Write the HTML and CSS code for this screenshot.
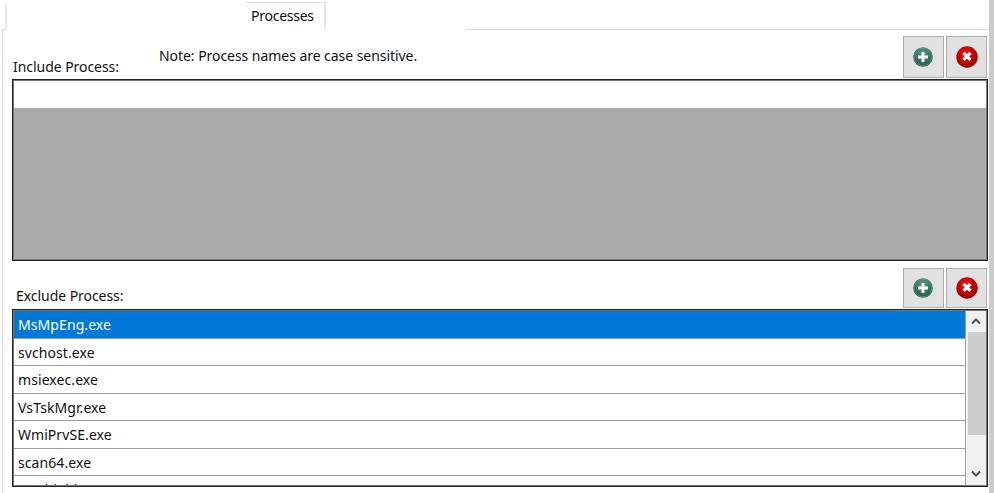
FILE: index.html
```
<!DOCTYPE html>
<html lang="en">
<head>
<meta charset="utf-8">
<title>Processes</title>
<link rel="stylesheet" href="styles.css">
</head>
<body>
<svg class="defs" aria-hidden="true">
  <defs>
    <radialGradient id="green" cx="50%" cy="30%" r="70%"><stop offset="0" stop-color="#5d9b8a"/><stop offset=".6" stop-color="#34705e"/><stop offset="1" stop-color="#285848"/></radialGradient>
    <radialGradient id="red" cx="45%" cy="35%" r="65%"><stop offset="0" stop-color="#e51a1a"/><stop offset=".6" stop-color="#c90000"/><stop offset="1" stop-color="#850000"/></radialGradient>
    <symbol id="add" viewBox="0 0 22 22"><circle cx="11" cy="11" r="9.8" fill="url(#green)"/><circle cx="11" cy="11" r="8.8" fill="none" stroke="#6fa092" stroke-width=".6"/><path d="M11 6v10M6 11h10" stroke="#fff" stroke-width="2.8"/></symbol>
    <symbol id="remove" viewBox="0 0 22 22"><circle cx="11" cy="11" r="10.7" fill="url(#red)"/><path d="M7.5 6.8l7 7M14.5 6.8l-7 7" stroke="#fff" stroke-width="3.2"/></symbol>
  </defs>
</svg>
<div class="window">
  <div class="tabs"><div class="tab-edge"></div><div class="tab"><span>Processes</span></div></div>
  <main class="page">
    <div class="top-line"><i></i><i></i><i></i></div>
    <header class="bar include">
      <label class="title">Include Process:</label>
      <p class="note">Note: Process names are case sensitive.</p>
      <div class="actions"><button><svg><use href="#add"/></svg></button><button><svg><use href="#remove"/></svg></button></div>
    </header>
    <section class="grid empty"><div class="blank"></div></section>
    <header class="bar exclude">
      <label class="title">Exclude Process:</label>
      <div class="actions"><button><svg><use href="#add"/></svg></button><button><svg><use href="#remove"/></svg></button></div>
    </header>
    <section class="grid list">
      <ul>
        <li class="selected">MsMpEng.exe</li>
        <li>svchost.exe</li>
        <li>msiexec.exe</li>
        <li>VsTskMgr.exe</li>
        <li>WmiPrvSE.exe</li>
        <li>scan64.exe</li>
        <li>mcshield.exe</li>
      </ul>
      <div class="scroll">
        <svg class="arrow" viewBox="0 0 18 21"><path d="M5 12.5l4-4 4 4" /></svg>
        <div class="thumb"></div>
        <svg class="arrow down" viewBox="0 0 18 21"><path d="M5 7.5l4 4 4-4" /></svg>
      </div>
    </section>
  </main>
</div>
<div class="edge"></div>
</body>
</html>
```
FILE: styles.css
```
* { box-sizing: border-box; }
body { margin: 0; width: 994px; height: 493px; overflow: hidden; display: flex; background: #fff; color: #111; font: 14px/20px "Noto Sans", "Open Sans", sans-serif; letter-spacing: -0.05px; }
.defs { position: absolute; width: 0; height: 0; }
.window { width: 989px; height: 493px; }
.edge { width: 5px; background: #cbcbcb; }
.tabs { height: 29px; display: flex; align-items: flex-start; }
.tab-edge { width: 7px; height: 25px; margin-top: 4px; border-right: 2px solid #e8e8e8; }
.tab { width: 81px; height: 27px; margin: 2px 0 0 238px; padding: 3px 0 0 6px; border-top: 1px solid #e0e0e0; border-right: 2px solid #e4e4e4; white-space: nowrap; letter-spacing: -0.25px; }
.page { height: 464px; margin-left: 2px; border-left: 1px solid #dcdcdc; }
.top-line { height: 1px; display: flex; }
.top-line i:nth-child(1) { width: 3px; background: #dcdcdc; }
.top-line i:nth-child(2) { width: 460px; }
.top-line i:nth-child(3) { flex: 1; background: #dcdcdc; }
.bar { display: flex; align-items: flex-start; white-space: nowrap; }
.include { height: 49px; }
.include .title { width: 156px; padding: 27px 0 0 10px; }
.note { margin: 0; padding-top: 16px; }
.actions { display: flex; gap: 2px; margin: 6px 2px 0 auto; }
button { width: 41px; height: 42px; padding: 0; display: flex; align-items: center; justify-content: center; border: 1px solid #adadad; background: #e1e1e1; }
button svg { width: 22px; height: 22px; margin: 0 2px 1px 0; }
button + button svg { margin-right: 0; }
.grid { width: 976px; margin-left: 9px; border: 1px solid #222; outline: 1px solid #777; outline-offset: -2px; }
.empty { height: 182px; padding: 1px; background: #ababab; }
.blank { height: 27px; background: #fff; }
.exclude { height: 48px; }
.exclude .title { padding: 25px 0 0 13px; }
.exclude .actions { margin-top: 7px; }
.exclude button { height: 40px; }
.list { height: 178px; padding: 1px; display: flex; overflow: hidden; }
ul { list-style: none; margin: 0; padding: 0; flex: 1; height: 174px; overflow: hidden; }
li { height: 27.5px; padding: 4px 0 0 4px; border-bottom: 1px solid #a0a0a0; letter-spacing: 0.08px; }
li:last-child { padding-top: 3.5px; }
.selected { background: #0078d7; color: #fff; }
.scroll { width: 21px; height: 174px; padding-left: 1px; border-left: 1px solid #a0a0a0; background: #f0f0f0; display: flex; flex-direction: column; }
.arrow { width: 18px; height: 21px; display: block; }
.arrow path { fill: none; stroke: #555; stroke-width: 2; }
.thumb { height: 103px; width: 18px; margin-left: 1px; background: #cdcdcd; }
.down { margin-top: auto; }
```
